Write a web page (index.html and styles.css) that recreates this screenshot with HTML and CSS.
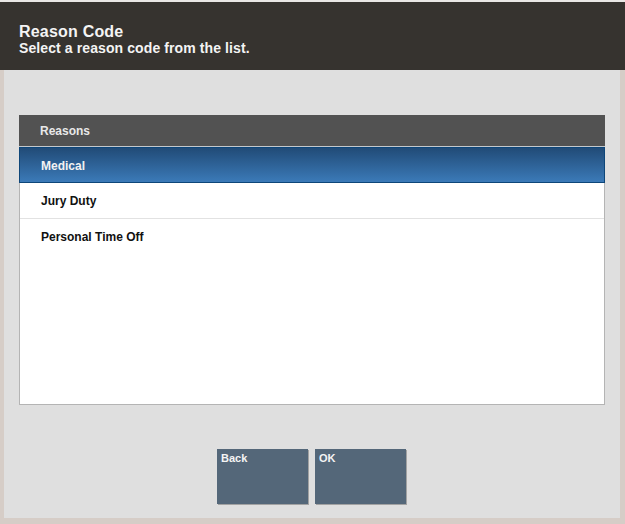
FILE: index.html
```html
<!DOCTYPE html>
<html>
<head>
<meta charset="utf-8">
<link rel="stylesheet" href="styles.css">
</head>
<body>
<div class="window">
  <div class="header">
    <div class="title">Reason Code</div>
    <div class="subtitle">Select a reason code from the list.</div>
  </div>
  <div class="main">
    <div class="panel">
      <div class="panel-head">Reasons</div>
      <div class="list">
        <div class="row selected">Medical</div>
        <div class="row">Jury Duty</div>
        <div class="row last">Personal Time Off</div>
      </div>
    </div>
    <div class="buttons">
      <div class="btn">Back</div>
      <div class="btn">OK</div>
    </div>
  </div>
</div>
</body>
</html>
```
FILE: styles.css
```css
html, body {
  margin: 0;
  padding: 0;
}
body {
  width: 625px;
  height: 524px;
  overflow: hidden;
  font-family: "Liberation Sans", Arial, sans-serif;
  background: #dfdfdf;
}
.window {
  height: 524px;
  display: flex;
  flex-direction: column;
  border-top: 2px solid #e9e7e5;
  box-sizing: border-box;
}
.header {
  height: 68px;
  background: #36332f;
  padding: 21px 19px 0;
  box-sizing: border-box;
  color: #f4f4f4;
  font-weight: bold;
}
.title {
  font-size: 16px;
  line-height: 18px;
  letter-spacing: 0.2px;
}
.subtitle {
  font-size: 14px;
  line-height: 14px;
  letter-spacing: 0.1px;
}
.main {
  flex: 1;
  border-left: 4px solid #d6cdc7;
  border-right: 5px solid #d6cdc7;
  border-bottom: 6px solid #d6cdc7;
  background: #dfdfdf;
  display: flex;
  flex-direction: column;
}
.panel {
  margin: 45px 15px 0;
  height: 290px;
  display: flex;
  flex-direction: column;
}
.panel-head {
  height: 30px;
  padding-top: 1px;
  background: #525252;
  color: #e8e8e8;
  font-size: 12px;
  font-weight: bold;
  line-height: 30px;
  padding-left: 21px;
  border-bottom: 1px solid #c4c8cc;
}
.list {
  flex: 1;
  background: #ffffff;
  border: 1px solid #b4b4b4;
  border-top: none;
}
.row {
  height: 33px;
  padding-top: 2px;
  line-height: 33px;
  padding-left: 21px;
  font-size: 12px;
  font-weight: bold;
  color: #111111;
  border-bottom: 1px solid #e2e2e2;
}
.row.last {
  border-bottom-color: transparent;
}
.row.selected {
  height: 32px;
  padding-top: 2px;
  line-height: 32px;
  margin: 0 -1px 0 -1px;
  padding-left: 21px;
  border: 1px solid #0e4679;
  background: linear-gradient(#214b77, #3b7ab8);
  color: #f2f2f2;
}
.buttons {
  margin-top: 44px;
  padding-right: 1px;
  display: flex;
  justify-content: center;
  gap: 7px;
}
.btn {
  width: 91px;
  height: 55px;
  box-sizing: border-box;
  background: #546779;
  box-shadow: 1px 1px 0 #a2a2a2;
  color: #f4f4f4;
  font-size: 11px;
  font-weight: bold;
  line-height: 13px;
  padding: 3px 4px;
}
```
